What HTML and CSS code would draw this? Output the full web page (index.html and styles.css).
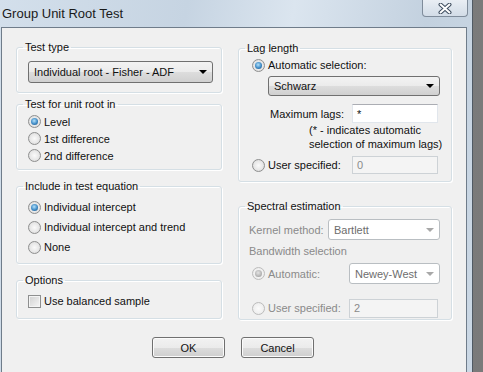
FILE: index.html
```html
<!DOCTYPE html>
<html lang="en">
<head>
  <meta charset="UTF-8">
  <title>Group Unit Root Test</title>
  <link rel="stylesheet" href="styles.css">
</head>
<body>
  <div class="window">
    <div class="titlebar">
      <span class="title">Group Unit Root Test</span>
      <span class="close">
        <svg width="14" height="11" viewBox="0 0 14 11">
          <path d="M2.5 1.5 L11.5 9.5 M11.5 1.5 L2.5 9.5" stroke="#3c4b5d" stroke-width="4" stroke-linecap="round"/>
          <path d="M2.5 1.5 L11.5 9.5 M11.5 1.5 L2.5 9.5" stroke="#ffffff" stroke-width="2" stroke-linecap="round"/>
        </svg>
      </span>
    </div>

    <div class="client">
      <div class="columns">
        <!-- left column -->
        <div class="col col-left">
          <fieldset class="group g-type">
            <legend>Test type</legend>
            <div class="combo c-type"><span>Individual root - Fisher - ADF</span><i class="arrow"></i></div>
          </fieldset>

          <fieldset class="group g-unit">
            <legend>Test for unit root in</legend>
            <div class="opt"><span class="radio on"></span>Level</div>
            <div class="opt"><span class="radio"></span>1st difference</div>
            <div class="opt"><span class="radio"></span>2nd difference</div>
          </fieldset>

          <fieldset class="group g-incl">
            <legend>Include in test equation</legend>
            <div class="opt"><span class="radio on"></span>Individual intercept</div>
            <div class="opt"><span class="radio"></span>Individual intercept and trend</div>
            <div class="opt"><span class="radio"></span>None</div>
          </fieldset>

          <fieldset class="group g-opts">
            <legend>Options</legend>
            <div class="opt"><span class="check"></span>Use balanced sample</div>
          </fieldset>
        </div>

        <!-- right column -->
        <div class="col col-right">
          <fieldset class="group g-lag">
            <legend>Lag length</legend>
            <div class="opt r-auto"><span class="radio on"></span>Automatic selection:</div>
            <div class="combo c-schwarz"><span>Schwarz</span><i class="arrow"></i></div>
            <div class="opt r-max">
              <span class="lbl l-max">Maximum lags:</span>
              <span class="edit e-max">*</span>
            </div>
            <div class="note">(* - indicates automatic<br>selection of maximum lags)</div>
            <div class="opt r-user">
              <span class="radio"></span>
              <span class="lbl l-user">User specified:</span>
              <span class="edit e-user off">0</span>
            </div>
          </fieldset>

          <fieldset class="group g-spec">
            <legend>Spectral estimation</legend>
            <div class="opt r-kernel off">
              <span class="lbl l-kernel">Kernel method:</span>
              <div class="combo off c-kernel"><span>Bartlett</span><i class="arrow"></i></div>
            </div>
            <div class="sub off">Bandwidth selection</div>
            <div class="opt r-bauto off">
              <span class="radio on off"></span>
              <span class="lbl l-band">Automatic:</span>
              <div class="combo off c-band"><span>Newey-West</span><i class="arrow"></i></div>
            </div>
            <div class="opt r-buser off">
              <span class="radio off"></span>
              <span class="lbl l-band">User specified:</span>
              <span class="edit e-band off">2</span>
            </div>
          </fieldset>
        </div>
      </div>

      <div class="buttons">
        <button>OK</button>
        <button>Cancel</button>
      </div>
    </div>
  </div>
</body>
</html>
```

FILE: styles.css
```css
body {
  margin: 0;
  width: 483px;
  height: 372px;
  overflow: hidden;
  background: linear-gradient(90deg, #939393, #7a7a7a);
  font-family: "Liberation Sans", Arial, sans-serif;
  font-size: 11px;
  color: #111;
}
.window {
  width: 473px;
  height: 372px;
  padding: 0 5px 0 1px;
  box-sizing: border-box;
  border-right: 1px solid #505a64;
  display: flex;
  flex-direction: column;
  background: linear-gradient(100deg, #d3dfeb 0%, #c6d4e2 35%, #dbe5ef 55%, #c3d1df 80%, #cbd8e5 100%);
}
.titlebar {
  height: 27px;
  display: flex;
  align-items: flex-start;
}
.title {
  font-size: 13px;
  color: #1a1a1a;
  padding: 6px 0 0 1px;
}
.close {
  margin-left: auto;
  margin-right: -1px;
  width: 46px;
  height: 17px;
  box-sizing: border-box;
  border: 1px solid #7f8c9b;
  border-top: none;
  border-radius: 0 0 4px 4px;
  background: linear-gradient(#e9eef4, #d2dce7);
  display: flex;
  align-items: center;
  justify-content: center;
}
.client {
  flex: 1;
  border: 1px solid #6f7c8a;
  border-bottom: none;
  background: #f0f0f0;
  padding: 12px 0 0 14px;
}
.columns {
  display: flex;
  align-items: flex-start;
  gap: 16px;
}
.col {
  display: flex;
  flex-direction: column;
}
.col-left { width: 206px; }
.col-right { width: 214px; margin-top: 1px; }

/* group boxes */
.group {
  margin: 0;
  min-width: 0;
  border: 1px solid #d5dfe5;
  border-radius: 3px;
  box-shadow: inset 1px 1px 0 #fff, 1px 1px 0 #fff;
}
.group legend {
  padding: 0 2px;
  line-height: 14px;
  margin-left: -5px;
  color: #111;
}
.col-right .group legend { margin-left: -7px; }
.g-type { padding: 7px 8px 9px 11px; }
.g-unit { margin-top: 4px; padding: 2px 8px 5px 11px; }
.g-unit .opt { height: 17px; }
.g-incl { margin-top: 9px; padding: 4px 8px 6px 11px; }
.g-incl .opt { height: 20px; }
.g-opts { margin-top: 9px; padding: 5px 8px 8px 11px; }
.g-opts .opt { height: 18px; }
.g-lag { padding: 1px 11px 7px 13px; }
.g-spec { margin-top: 17px; padding: 0 11px 2px 13px; }

.opt {
  display: flex;
  align-items: center;
  white-space: nowrap;
}
.off { color: #8a8a8a; }

/* radio and check */
.radio {
  position: relative;
  flex: none;
  width: 13px;
  height: 13px;
  box-sizing: border-box;
  border-radius: 50%;
  border: 1px solid #8e8f8f;
  background: radial-gradient(circle at 50% 50%, #fafafa 0, #e8e8e8 55%, #cfcfcf 100%);
  margin-right: 3px;
}
.radio.on::after {
  content: "";
  position: absolute;
  left: 2px;
  top: 2px;
  width: 7px;
  height: 7px;
  border-radius: 50%;
  background: radial-gradient(circle at 45% 40%, #b4e2fb 0, #3f8bc6 55%, #174a77 100%);
}
.radio.off {
  border-color: #bcbcbc;
  background: radial-gradient(circle at 50% 50%, #fbfbfb 0, #f0f0f0 60%, #e2e2e2 100%);
}
.radio.on.off::after {
  background: radial-gradient(circle at 45% 40%, #e4e4e4 0, #b4b4b4 60%, #8e8e8e 100%);
}
.check {
  flex: none;
  width: 13px;
  height: 13px;
  box-sizing: border-box;
  border: 1px solid #8e8f8f;
  background: linear-gradient(135deg, #d0d0d0, #f6f6f6);
  box-shadow: inset 0 0 0 1px #f4f4f4;
  margin-right: 3px;
}

/* combo boxes */
.combo {
  display: flex;
  align-items: center;
  box-sizing: border-box;
  border: 1px solid #707070;
  border-radius: 3px;
  background: linear-gradient(#f3f3f3 0%, #ebebeb 50%, #dddddd 50%, #d0d0d0 100%);
  padding: 0 0 0 5px;
}
.combo span { flex: 1; }
.arrow {
  width: 0;
  height: 0;
  border-left: 4px solid transparent;
  border-right: 4px solid transparent;
  border-top: 4px solid #000;
  margin-right: 5px;
}
.combo.off {
  background: #fff;
  border-color: #b9bec2;
  color: #6d6d6d;
}
.combo.off .arrow { border-top-color: #a8a8a8; }
.c-type { height: 22px; }
.c-schwarz { height: 20px; width: 172px; margin: 2px 0 0 16px; }
.c-kernel { height: 21px; width: 112px; }
.c-band { height: 21px; width: 91px; }

/* edit boxes */
.edit {
  box-sizing: border-box;
  display: flex;
  align-items: center;
  background: #fff;
  border: 1px solid #e1e6ec;
  border-top-color: #abadb3;
  padding-left: 4px;
}
.edit.off {
  background: #f4f4f4;
  border-color: #cdd2d6;
  color: #8a8a8a;
}
.e-max { width: 86px; height: 19px; }
.e-user { width: 86px; height: 18px; }
.e-band { width: 89px; height: 19px; }

.r-auto { height: 18px; }
.r-max { margin-top: 8px; height: 19px; }
.l-max { width: 82px; margin-left: 18px; }
.note { line-height: 14px; padding-left: 57px; white-space: nowrap; }
.r-user { margin-top: 5px; height: 18px; }
.l-user { width: 84px; }

.r-kernel { margin-top: 6px; height: 21px; }
.l-kernel { width: 79px; margin-left: -3px; }
.sub { margin: 4px 0 0 -3px; line-height: 14px; }
.r-bauto { margin-top: 5px; height: 21px; }
.r-buser { margin-top: 15px; height: 18px; }
.l-band { width: 81px; }

/* buttons */
.buttons {
  display: flex;
  justify-content: center;
  gap: 16px;
  margin-top: 17px;
  padding-right: 16px;
}
button {
  width: 73px;
  height: 21px;
  font-family: inherit;
  font-size: 11px;
  color: #111;
  border: 1px solid #707070;
  border-radius: 3px;
  background: linear-gradient(#f2f2f2 0%, #ebebeb 50%, #dddddd 50%, #cfcfcf 100%);
  box-shadow: inset 0 0 0 1px #fbfbfb;
}
```
